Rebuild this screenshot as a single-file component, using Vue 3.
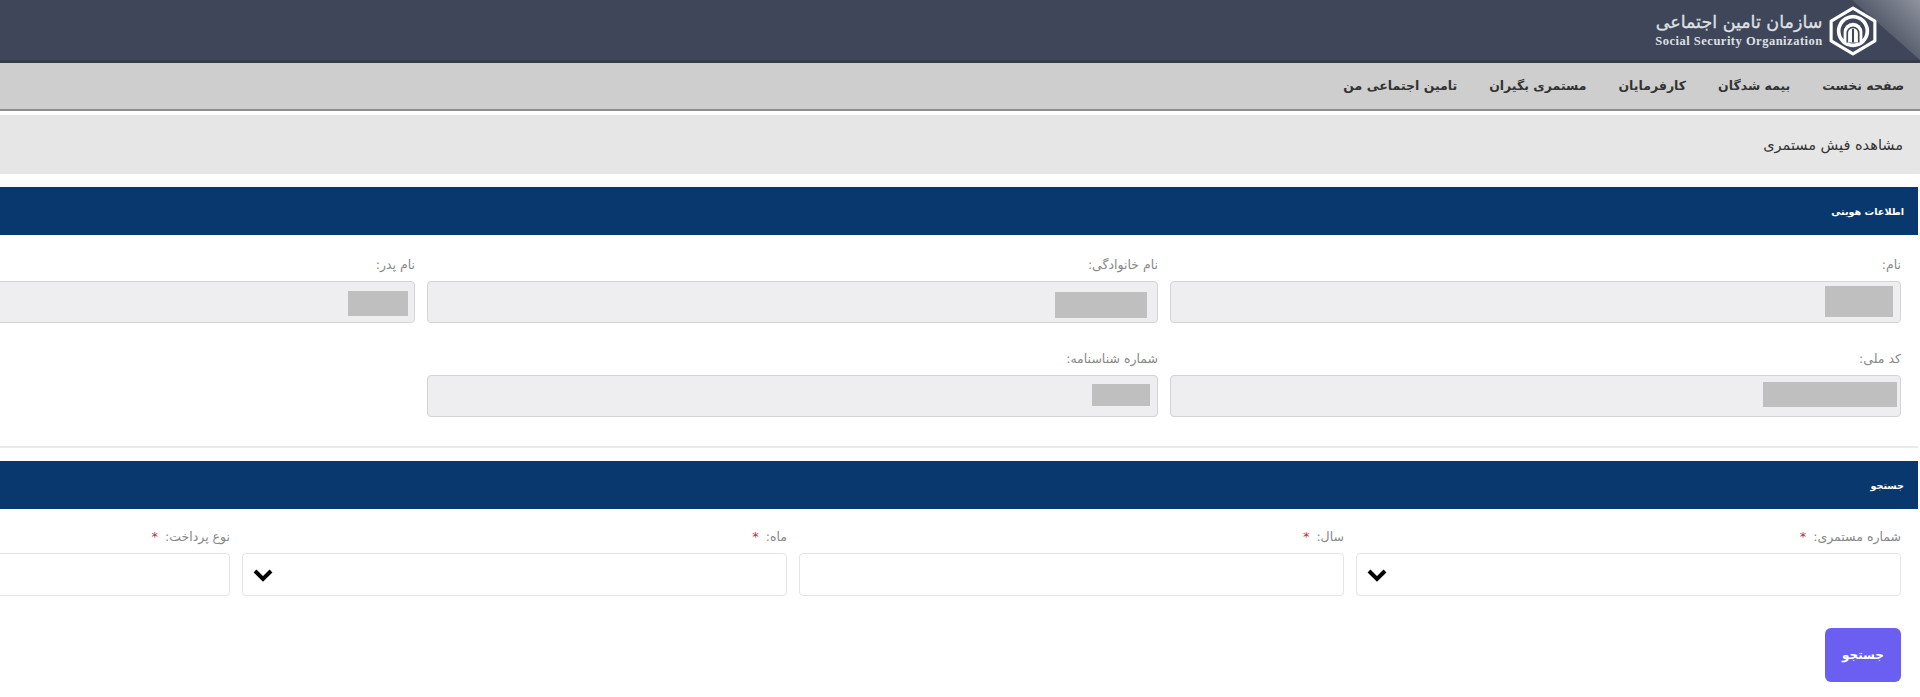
<script setup>
const navItems = ['صفحه نخست', 'بیمه شدگان', 'کارفرمایان', 'مستمری بگیران', 'تامین اجتماعی من']
const identity = [
  { label: 'نام:', w: 68, h: 31, inset: 7, top: 4 },
  { label: 'نام خانوادگی:', w: 92, h: 26, inset: 10, top: 10 },
  { label: 'نام پدر:', w: 60, h: 25, inset: 6, top: 9 },
  { label: 'کد ملی:', w: 134, h: 25, inset: 3, top: 6 },
  { label: 'شماره شناسنامه:', w: 58, h: 22, inset: 7, top: 8 },
]
const search = [
  { label: 'شماره مستمری:', select: true },
  { label: 'سال:', select: false },
  { label: 'ماه:', select: true },
  { label: 'نوع پرداخت:', select: false },
]
</script>

<template>
  <div class="page" dir="rtl">
    <header class="top">
      <div class="corner"></div>
      <div class="brand">
        <svg class="logo" viewBox="0 0 48 48" aria-hidden="true">
          <path d="M24 2 45 14.500v19L24 46 3 33.500v-19Z" fill="#3f4659" stroke="#fff" stroke-width="3" stroke-linejoin="round"/>
          <path d="M24 8.500a15.500 15.500 0 1 1-.01 0Z" fill="#fff"/>
          <circle cx="24" cy="24" r="12" fill="#3f4659"/>
          <path d="M15 35V25a9 9 0 0 1 18 0v10Z" fill="#fff"/>
          <path d="M18.500 35V26a5.500 5.500 0 0 1 11 0v9" fill="none" stroke="#3f4659" stroke-width="1.600"/>
          <path d="M24 22v13" stroke="#3f4659" stroke-width="2"/>
        </svg>
        <div class="brand-text">
          <div class="brand-fa">سازمان تامین اجتماعی</div>
          <div class="brand-en" dir="ltr">Social Security Organization</div>
        </div>
      </div>
    </header>

    <nav class="nav">
      <a v-for="item in navItems" :key="item" class="nav-item">{{ item }}</a>
    </nav>

    <div class="title-band">مشاهده فیش مستمری</div>

    <section class="card first">
      <h2 class="bar">اطلاعات هویتی</h2>
      <div class="fields identity">
        <div v-for="f in identity" :key="f.label" class="field">
          <label class="label">{{ f.label }}</label>
          <div class="control readonly">
            <span class="mask" :style="{ width: f.w + 'px', height: f.h + 'px', marginRight: f.inset + 'px', marginTop: f.top + 'px' }"></span>
          </div>
        </div>
      </div>
    </section>

    <section class="card second">
      <h2 class="bar">جستجو</h2>
      <div class="fields searching">
        <div v-for="f in search" :key="f.label" class="field">
          <label class="label">{{ f.label }} <span class="req">*</span></label>
          <div class="control">
            <svg v-if="f.select" class="chev" viewBox="0 0 22 14" aria-hidden="true">
              <path d="M3 3l8 8 8-8" fill="none" stroke="#000" stroke-width="4"/>
            </svg>
          </div>
        </div>
      </div>
      <div class="actions">
        <button class="btn" type="button">جستجو</button>
      </div>
    </section>
  </div>
</template>

<style>
html, body { margin: 0; background: #fff; overflow: hidden; }
</style>

<style scoped>
.page {
  width: 1920px;
  height: 697px;
  overflow: hidden;
  font-family: "DejaVu Sans", "Liberation Sans", sans-serif;
  color: #333;
  background: #fff;
}
.top {
  position: relative;
  height: 63px;
  box-sizing: border-box;
  padding: 3px 42px 0 0;
  background: #3f4659;
  border-bottom: 3px solid #363b4a;
  overflow: hidden;
}
.corner {
  position: absolute;
  top: 0;
  right: 0;
  width: 68px;
  height: 60px;
  background: linear-gradient(225deg, #8f939d, #525869 55%, #484e61);
  clip-path: polygon(0 0, 100% 0, 100% 100%);
}
.brand { position: relative; display: flex; align-items: center; gap: 3px; }
.logo { width: 50px; height: 50px; margin-top: 3px; flex: none; }
.brand-text { width: 172px; color: #dfe0e4; margin-top: -1px; }
.brand-fa { font-size: 17.500px; line-height: 24px; text-align: center; white-space: nowrap; -webkit-text-stroke: 0.3px #dfe0e4; }
.brand-en {
  font-family: "Liberation Serif", serif;
  font-weight: 700;
  font-size: 12.500px;
  line-height: 14px;
  letter-spacing: 0.5px;
  text-align: center;
  white-space: nowrap;
}
.nav {
  height: 46px;
  box-sizing: content-box;
  display: flex;
  align-items: center;
  gap: 32px;
  padding-right: 16px;
  background: #cecece;
  border-bottom: 2px solid #8e8e8e;
}
.nav-item { font-size: 12.500px; font-weight: 700; color: #333; white-space: nowrap; margin-top: -2px; }
.title-band {
  margin-top: 4px;
  height: 59px;
  display: flex;
  align-items: center;
  padding-right: 17px;
  background: #e6e6e6;
  font-size: 14.500px;
  color: #333;
}
.card { width: 1918px; margin-right: 2px; box-sizing: border-box; }
.first {
  margin-top: 13px;
  height: 261px;
  border-bottom: 2px solid #eaeaea;
}
.second { margin-top: 13px; }
.bar {
  margin: 0;
  height: 48px;
  display: flex;
  align-items: center;
  padding-right: 14px;
  background: #08386e;
  color: #fff;
  font-size: 9.600px;
  font-weight: 700;
}
.fields { display: grid; column-gap: 12px; padding: 22px 17px 0 0; width: max-content; }
.identity { grid-template-columns: repeat(3, 731px); row-gap: 28px; }
.searching { grid-template-columns: repeat(4, 545px); padding-top: 20px; }
.searching .control { height: 43px; }
.label { display: block; height: 24px; font-size: 12.500px; line-height: 16px; color: #888; }
.req { color: #b5324a; font-size: 13px; margin-right: 3px; }
.control {
  height: 42px;
  box-sizing: border-box;
  display: flex;
  align-items: flex-start;
  border: 1px solid #e4e4e4;
  border-radius: 4px;
  background: #fff;
}
.readonly { background: #eeeef0; border: 1.500px solid #d4d4d6; }
.mask { display: block; background: #bfbfbf; flex: none; }
.chev { width: 22px; height: 14px; margin: 14px auto 0 9px; margin-right: auto; }
.actions { display: flex; padding: 32px 17px 0 0; }
.btn {
  width: 76px;
  height: 54px;
  border: 0;
  border-radius: 6px;
  background: #6a5ff0;
  color: #fff;
  font: 700 12px "DejaVu Sans", sans-serif;
}
</style>
